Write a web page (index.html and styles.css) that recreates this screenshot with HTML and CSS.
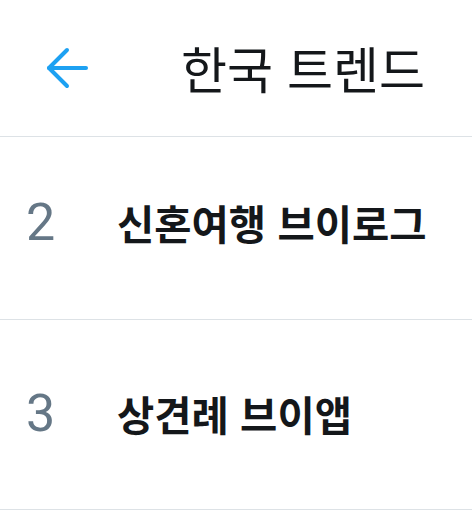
FILE: index.html
```html
<!DOCTYPE html>
<html lang="ko">
<head>
<meta charset="utf-8">
<link rel="stylesheet" href="styles.css">
</head>
<body>
<div class="app">
  <header class="header">
    <span class="back">
      <svg width="44" height="44" viewBox="0 0 44 44" fill="none" stroke="#1da1f2" stroke-width="4" stroke-linecap="round" stroke-linejoin="round">
        <path d="M4 22 H41"/>
        <path d="M22 4 L4 22 L22 40"/>
      </svg>
    </span>
    <h1 class="title">한국 트렌드</h1>
  </header>
  <ul class="list">
    <li class="row row-a">
      <span class="rank">2</span>
      <span class="name">신혼여행 브이로그</span>
    </li>
    <li class="row row-b">
      <span class="rank">3</span>
      <span class="name">상견례 브이앱</span>
    </li>
  </ul>
</div>
</body>
</html>
```
FILE: styles.css
```css
html, body {
  margin: 0;
  padding: 0;
  background: #ffffff;
}
body {
  font-family: "Noto Sans CJK KR", "Noto Sans", sans-serif;
  color: #14171a;
}
.app {
  width: 472px;
}
.header {
  height: 136px;
  border-bottom: 1px solid #dde2e6;
  display: flex;
  align-items: center;
  box-sizing: content-box;
}
.back {
  display: flex;
  margin-left: 45px;
  width: 44px;
  height: 44px;
}
.title {
  margin: -2px 0 0 92px;
  font-size: 50px;
  font-weight: 400;
  line-height: 1;
  color: #14171a;
}
.list {
  list-style: none;
  margin: 0;
  padding: 0;
}
.row {
  display: flex;
  align-items: baseline;
  border-bottom: 1px solid #dde2e6;
  padding-left: 26px;
}
.row-a {
  height: 183px;
  padding-top: 60px;
  box-sizing: border-box;
}
.row-b {
  height: 190px;
  padding-top: 68px;
  box-sizing: border-box;
}
.rank {
  width: 91px;
  font-family: Roboto, "Noto Sans", sans-serif;
  font-size: 52px;
  color: #657786;
  line-height: 1;
}
.name {
  font-size: 40.5px;
  font-weight: 700;
  line-height: 1;
  color: #14171a;
}
```
